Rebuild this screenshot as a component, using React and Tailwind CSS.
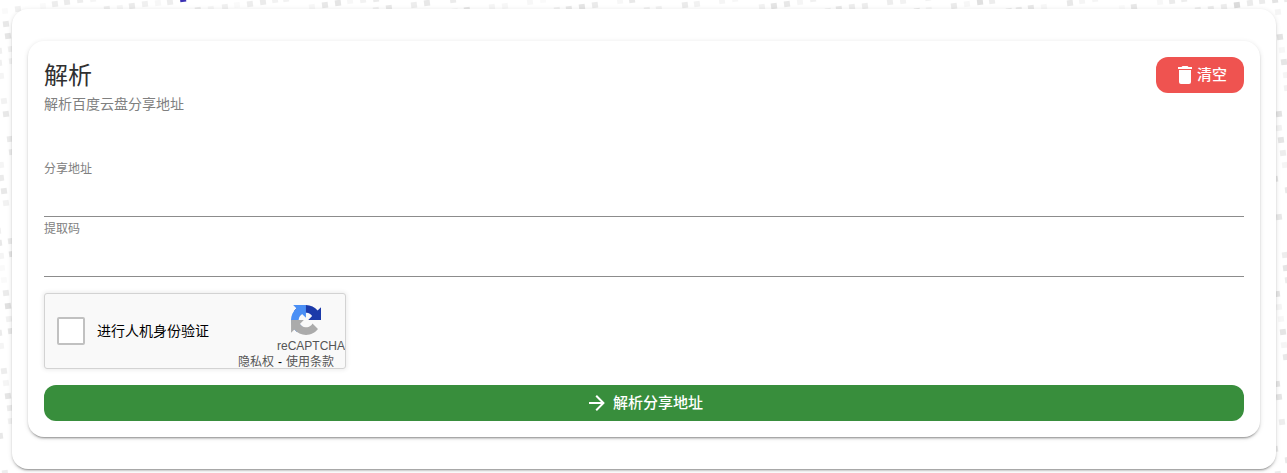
import { useState } from "react";

// [x, y, opacity] of the confetti squares behind the card
const SQUARES = [
  [2, 8, 0.02], [15, 6, 0.06], [40, 3, 0.02], [52, 1, 0.07], [64, -1, 0.08], [77, -3, 0.07], [90, -4, 0.04],
  [104, 6, 0.07], [117, 5, 0.04], [129, 3, 0.08], [142, 1, 0.06], [155, 0, 0.03], [167, -1, 0.07],
  [195, 7, 0.08], [208, 6, 0.04], [222, 4, 0.06], [234, 2, 0.02], [247, 1, 0.07], [260, -1, 0.08], [272, -3, 0.05], [283, -4, 0.05],
  [309, 4, 0.03], [322, 2, 0.09], [335, 0, 0.1], [347, -2, 0.03], [360, -3, 0.05], [373, -4, 0.08],
  [373, 7, 0.06], [386, 5, 0.09], [411, 2, 0.07], [424, 0, 0.09], [450, -3, 0.08], [452, 8, 0.03], [464, 7, 0.1],
  [489, 4, 0.04], [502, 3, 0.03], [527, -1, 0.03], [540, -3, 0.02], [554, 7, 0.06], [566, 6, 0.09], [579, 4, 0.1], [592, 2, 0.08],
  [617, -2, 0.03], [629, -3, 0.09], [644, 7, 0.06], [656, 6, 0.05], [682, 2, 0.08], [694, 1, 0.05], [719, -2, 0.04], [732, -4, 0.03],
  [759, 4, 0.05], [771, 3, 0.1], [784, 1, 0.09], [797, -1, 0.04], [810, -4, 0.06], [825, 8, 0.06], [836, 6, 0.09], [849, 4, 0.07], [862, 3, 0.07],
  [887, -1, 0.07], [900, -2, 0.05], [925, -5, 0.05], [914, 8, 0.09], [926, 7, 0.04], [951, 3, 0.08], [964, 1, 0.03], [977, -1, 0.12], [989, -2, 0.07],
  [1006, 8, 0.08], [1016, 7, 0.08], [1028, 5, 0.09], [1041, 4, 0.03], [1067, 0, 0.09], [1079, -2, 0.04], [1092, -4, 0.04],
  [1119, 5, 0.02], [1131, 4, 0.09], [1157, -1, 0.03], [1169, -2, 0.08], [1181, -4, 0.07], [1195, 7, 0.07], [1208, 6, 0.08], [1221, 4, 0.07],
  [1234, 2, 0.14], [1247, 0, 0.08], [1259, -2, 0.08], [1272, -3, 0.11], [1284, -4, 0.08],
  [3, 21, 0.09], [5, 33, 0.1], [8, 46, 0.05], [-4, 48, 0.06], [-4, 60, 0.06], [-2, 73, 0.04], [9, 58, 0.05], [1, 98, 0.05], [3, 111, 0.09], [7, 136, 0.08], [9, 149, 0.08],
  [-2, 162, 0.04], [-2, 175, 0.08], [1, 188, 0.09], [3, 200, 0.05], [-5, 228, 0.06], [-4, 240, 0.09], [8, 238, 0.08], [-2, 253, 0.04], [9, 251, 0.1], [-1, 265, 0.02], [1, 277, 0.02], [3, 290, 0.08],
  [5, 303, 0.12], [6, 316, 0.05], [8, 328, 0.09], [-4, 330, 0.08], [-2, 343, 0.04], [1, 368, 0.07], [3, 380, 0.04], [5, 393, 0.1], [7, 405, 0.07], [8, 418, 0.05], [-3, 433, 0.09], [2, 470, 0.07],
  [1275, 9, 0.04], [1277, 34, 0.11], [1279, 47, 0.03], [1281, 59, 0.1], [1283, 72, 0.04], [1284, 85, 0.05], [1276, 111, 0.11],
  [1276, 125, 0.05], [1278, 137, 0.1], [1280, 150, 0.07], [1282, 162, 0.04], [1272, 176, 0.1], [1285, 187, 0.09],
  [1276, 214, 0.09], [1282, 252, 0.07], [1283, 265, 0.1], [1285, 277, 0.08], [1274, 291, 0.1], [1276, 304, 0.04], [1278, 316, 0.03],
  [1280, 329, 0.1], [1281, 342, 0.04], [1283, 354, 0.09], [1274, 381, 0.1], [1276, 394, 0.1], [1279, 419, 0.07], [1272, 446, 0.09], [1285, 457, 0.09], [1275, 471, 0.08],
];

function Backdrop() {
  return (
    <svg aria-hidden="true" className="absolute inset-0 -z-10 h-full w-full">
      {SQUARES.map(([x, y, o], i) => (
        <rect key={i} x={x} y={y} width="6" height="6" fillOpacity={o} transform={`rotate(-7 ${x + 3} ${y + 3})`} />
      ))}
      <rect x="180" y="-4" width="6" height="6" fill="#3c32b4" transform="rotate(-7 183 -1)" />
    </svg>
  );
}

function TextField({ id, label, value, onChange }) {
  return (
    <div className="flex flex-col border-b border-[#8c8c8c]">
      <label htmlFor={id} className="text-xs leading-6 text-[#808080]">{label}</label>
      <input id={id} value={value} onChange={(e) => onChange(e.target.value)} className="h-[35px] w-full bg-transparent text-base outline-none" />
    </div>
  );
}

function CaptchaLogo() {
  return (
    <svg aria-hidden="true" viewBox="0 0 64 64" className="ml-3.5 h-[30px] w-[30px]">
      <path fill="#1c3aa9" d="M64 31.955l-.018-1.370V4.687l-7.160 7.160C50.960 4.674 42.033.093 32.034.093c-10.400 0-19.645 4.960-25.492 12.640L18.278 24.600c1.150-2.127 2.783-3.954 4.757-5.336 2.052-1.600 4.960-2.910 8.998-2.910.488 0 .864.057 1.140.164 5.002.395 9.340 3.155 11.900 7.165l-8.304 8.304z" />
      <path fill="#4a8ff5" d="M31.862.094l-1.370.018H4.594l7.160 7.160C4.580 13.136 0 22.063 0 32.062c0 10.400 4.960 19.645 12.640 25.492L24.507 45.818c-2.127-1.150-3.954-2.783-5.336-4.757-1.600-2.052-2.910-4.960-2.910-8.998 0-.488.057-.864.164-1.140.395-5.002 3.155-9.340 7.165-11.900l8.304 8.304z" />
      <path fill="#ababab" d="M.094 32.063l.018 1.370v25.900l7.160-7.160c5.864 7.174 14.790 11.755 24.790 11.755 10.400 0 19.645-4.960 25.492-12.640L45.818 39.420a15.550 15.550 0 0 1-4.757 5.336c-2.052 1.600-4.960 2.910-8.998 2.910-.488 0-.864-.057-1.140-.164-5.002-.395-9.340-3.155-11.900-7.165l8.304-8.304z" />
    </svg>
  );
}

function Captcha() {
  return (
    <div className="flex h-19 w-[302px] items-start justify-between overflow-hidden rounded-[3px] border border-[#d3d3d3] bg-[#f9f9f9] shadow-[0_0_4px_1px_rgba(0,0,0,0.08)]">
      <label className="flex h-full items-center gap-3 pl-3 text-sm text-black">
        <input type="checkbox" className="h-7 w-7 appearance-none rounded-xs border-2 border-[#c1c1c1] bg-white checked:bg-[#4a8ff5]" />
        进行人机身份验证
      </label>
      <div className="flex flex-col items-end pt-[11px] text-xs leading-4 text-[#555]">
        <div className="flex flex-col gap-[3px]">
          <CaptchaLogo />
          <span>reCAPTCHA</span>
        </div>
        <div className="flex gap-1 pr-[11px]">
          <a href="#privacy">隐私权</a>
          <span className="text-black">-</span>
          <a href="#terms">使用条款</a>
        </div>
      </div>
    </div>
  );
}

const elevation = "shadow-[0_3px_1px_-2px_rgba(0,0,0,0.2),0_2px_2px_0_rgba(0,0,0,0.14),0_1px_5px_0_rgba(0,0,0,0.12)]";

export default function App() {
  const [url, setUrl] = useState("");
  const [code, setCode] = useState("");
  const clear = () => {
    setUrl("");
    setCode("");
  };
  return (
    <div className="relative isolate overflow-hidden bg-white pt-[9px] pr-[11px] pb-1 pl-3 font-['Liberation_Sans','Noto_Sans_CJK_SC',sans-serif]">
      <Backdrop />
      <main className={`rounded-2xl bg-white px-4 py-8 ${elevation}`}>
        <form className={`rounded-2xl bg-white p-4 ${elevation}`} onSubmit={(e) => e.preventDefault()}>
          <header className="flex items-start justify-between">
            <div>
              <h1 className="text-2xl leading-[38px] text-[#303030]">解析</h1>
              <p className="text-sm leading-[18px] text-[#808080]">解析百度云盘分享地址</p>
            </div>
            <button type="button" onClick={clear} className="flex h-9 w-22 items-center justify-center rounded-xl bg-[#ef5350] text-[15px] leading-5 font-medium text-white">
              <svg aria-hidden="true" viewBox="0 0 24 24" className="h-6 w-6" fill="currentColor">
                <path d="M19 4h-3.500l-1-1h-5l-1 1H5v2h14zM6 19a2 2 0 0 0 2 2h8a2 2 0 0 0 2-2V7H6z" />
              </svg>
              清空
            </button>
          </header>
          <div className="mt-11">
            <TextField id="share-url" label="分享地址" value={url} onChange={setUrl} />
            <TextField id="share-code" label="提取码" value={code} onChange={setCode} />
          </div>
          <div className="py-4">
            <Captcha />
          </div>
          <button type="submit" className="flex h-9 w-full items-center justify-center gap-1 rounded-xl bg-[#388e3c] text-[15px] leading-5 font-medium text-white">
            <svg aria-hidden="true" viewBox="0 0 24 24" className="h-6 w-6" fill="currentColor">
              <path d="M4 11v2h12l-5.500 5.500 1.420 1.420L19.840 12l-7.920-7.920L10.500 5.500 16 11z" />
            </svg>
            解析分享地址
          </button>
        </form>
      </main>
    </div>
  );
}
